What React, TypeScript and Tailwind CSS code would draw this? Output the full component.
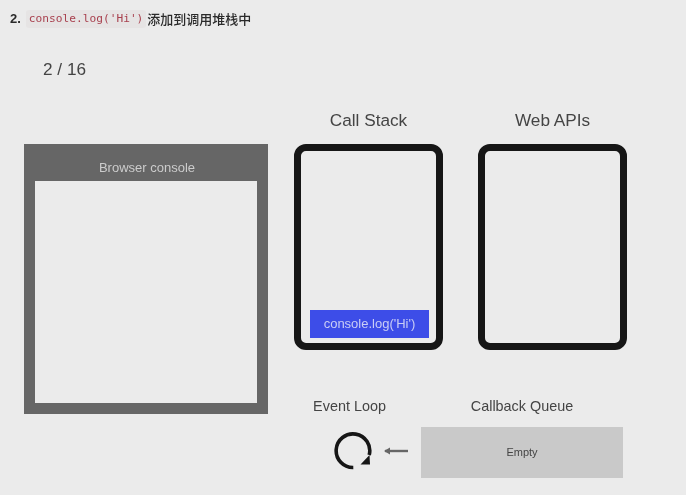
const sans = "font-['Liberation_Sans',Arial,sans-serif]";

function Frame({ title, children }: { title: string; children?: React.ReactNode }) {
  return (
    <div className="flex w-[149px] flex-col items-center">
      <h2 className="mb-[13px] h-[22px] text-[17.2px] leading-[22px] text-[#444]">{title}</h2>
      <div className="flex h-[206px] w-full flex-col justify-end rounded-[12px] border-[7px] border-[#161616] pb-[5px] pl-[9px] pr-[7px]">
        {children}
      </div>
    </div>
  );
}

export default function App() {
  return (
    <div className={`${sans} h-[495px] w-[686px] overflow-hidden bg-[#ebebeb] [filter:blur(0.4px)]`}>
      <div className="flex h-[18px] items-center pl-[10px] pt-[19px] text-[13px] text-[#2a2a2a]">
        <b className="mr-[5px] text-[13px]">2.</b>
        <code className="rounded-[3px] bg-[#e6e4e4] px-[3px] py-[1px] font-['DejaVu_Sans_Mono',monospace] text-[11.2px] font-medium text-[#a8404e]">
          console.log('Hi')
        </code>
        <span className="ml-[1px] font-['Noto_Sans_CJK_SC',sans-serif] font-medium">添加到调用堆栈中</span>
      </div>

      <p className="ml-[43px] mt-[39px] h-[22px] text-[17.2px] leading-[22px] text-[#444]">2 / 16</p>

      <div className="ml-[24px] mt-[29px] flex gap-[26px]">
        <div className="mt-[35px] h-[270px] w-[244px] bg-[#666] px-[11px] pb-[11px]">
          <div className="flex h-[37px] items-center justify-center pl-[2px] pt-[11px] text-[13px] text-[#ccc]">Browser console</div>
          <div className="h-[222px] bg-[#ebebeb]" />
        </div>

        <div className="w-[333px]">
          <div className="flex gap-[35px]">
            <Frame title="Call Stack">
              <div className="flex h-[28px] items-center justify-center bg-[#3d4de8] text-[13px] text-[#c9cdf5]">
                console.log('Hi')
              </div>
            </Frame>
            <Frame title="Web APIs" />
          </div>

          <div className="mt-[47px] flex">
            <div className="ml-[19px] flex w-[73px] flex-col items-center">
              <span className="whitespace-nowrap text-[14.4px] leading-[18px] text-[#444]">Event Loop</span>
              <svg className="ml-[7px] mt-[16px]" width="40" height="40" viewBox="0 0 40 40" fill="none">
                <path d="M20.3 36.5A16.8 16.8 0 1 1 36.2 24" stroke="#161616" strokeWidth="3.6" />
                <path d="M27.5 33.5H37L36.5 24Z" fill="#161616" />
              </svg>
            </div>
            <svg className="ml-[-3px] mt-[47px]" width="26" height="14" viewBox="0 0 26 14" fill="none">
              <path d="M2 7H25" stroke="#666" strokeWidth="2.4" />
              <path d="M1 7L7 3.5V10.5Z" fill="#666" />
            </svg>
            <div className="ml-[12px] flex w-[202px] flex-col items-center">
              <span className="whitespace-nowrap text-[14.4px] leading-[18px] text-[#444]">Callback Queue</span>
              <div className="mt-[12px] flex h-[51px] w-full items-center justify-center bg-[#c9c9c9] text-[11px] text-[#444]">
                Empty
              </div>
            </div>
          </div>
        </div>
      </div>
    </div>
  );
}
